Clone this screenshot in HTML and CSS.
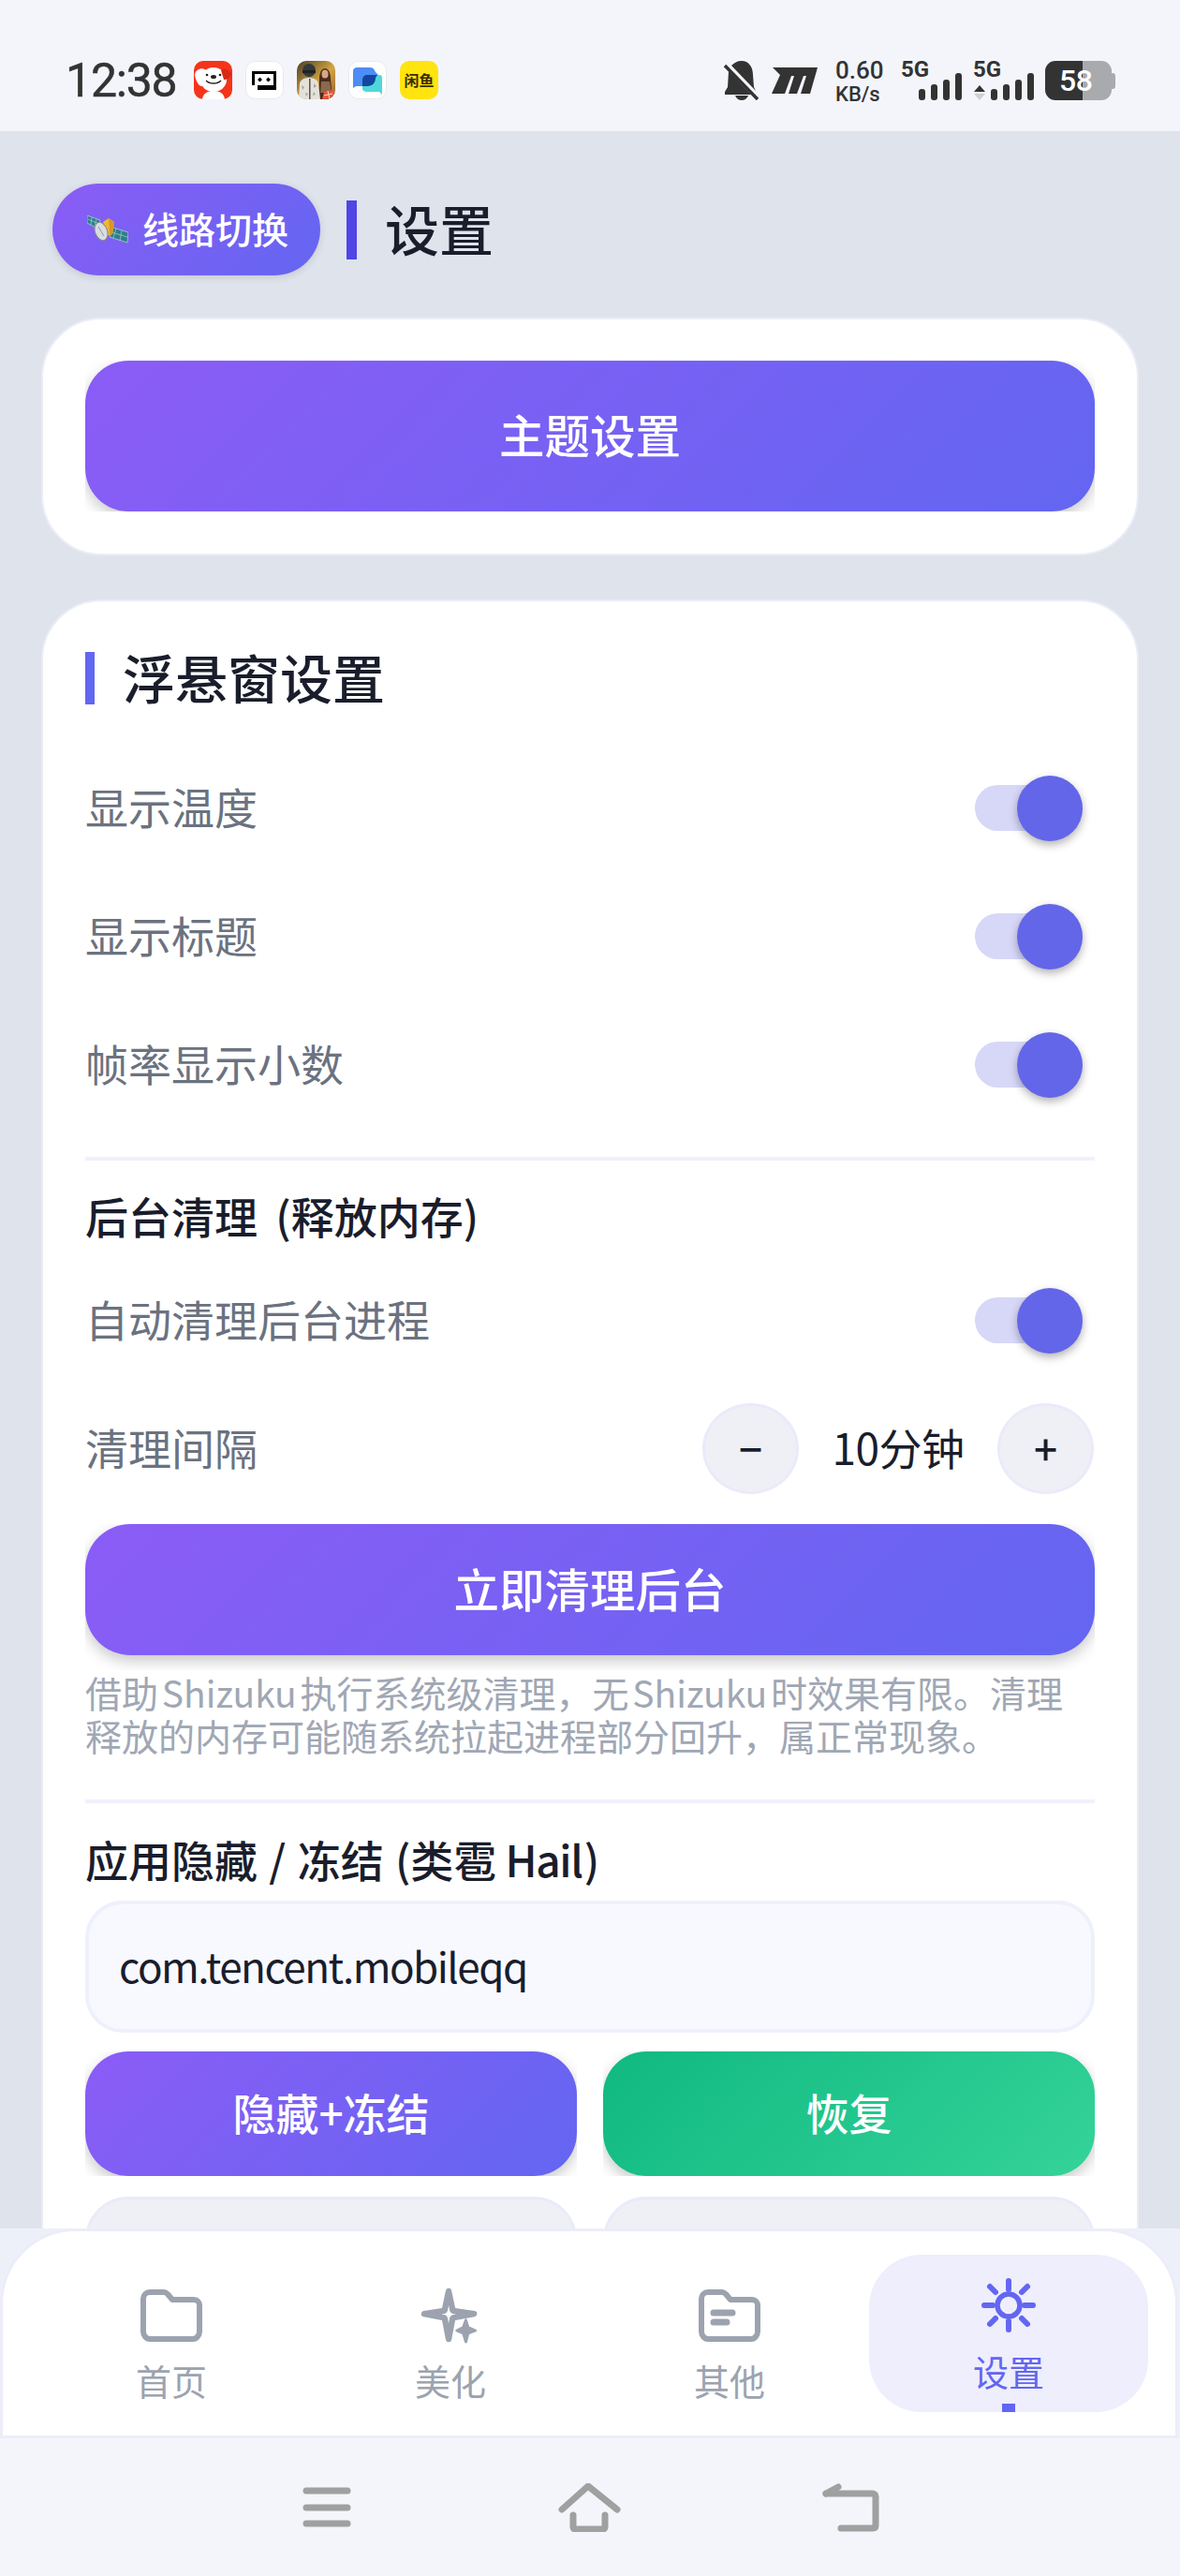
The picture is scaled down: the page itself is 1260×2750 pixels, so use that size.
FILE: index.html
```html
<!DOCTYPE html>
<html lang="zh-CN">
<head>
    <meta charset="UTF-8">
    <meta name="viewport" content="width=device-width, initial-scale=1.0">
    <title>设置</title>
    <link rel="stylesheet" href="styles.css">
</head>
<body>
    <div class="status-bar">
        <div class="status-left">
            <span class="clock">12:38</span>
            <div class="app-icons">
                <svg class="app-icon" viewBox="0 0 41 41">
                    <rect width="41" height="41" rx="10" fill="#f5341a"/>
                    <ellipse cx="21" cy="20" rx="14" ry="13" fill="#fff"/>
                    <path d="M1 14c1-5 8-8 12-4L9 27c-4 1-8-8-8-13z" fill="#fff"/>
                    <path d="M40 14c-1-4-7-7-11-4l3 10c3 0 7-2 8-6z" fill="#d62a12"/>
                    <path d="M9 41c1-7 6-9 12-9s11 2 12 9z" fill="#fff"/>
                    <ellipse cx="21" cy="17" rx="3" ry="2" fill="#222"/>
                    <circle cx="14" cy="15" r="1.300" fill="#222"/>
                    <circle cx="28" cy="15" r="1.300" fill="#222"/>
                    <path d="M13 21c4 4 12 4 16 0" fill="none" stroke="#222" stroke-width="1.300"/>
                </svg>
                <svg class="app-icon" viewBox="0 0 41 41">
                    <rect x=".5" y=".5" width="40" height="40" rx="10" fill="#fff" stroke="#e8e9ee"/>
                    <path d="M7 11h26v20H13v-5H7z" fill="#000"/>
                    <rect x="10" y="14" width="20" height="12" fill="#fff"/>
                    <path d="M15.500 17.500l2.500 2.500-2.500 2.500-2.500-2.500zM24.500 17.500l2.500 2.500-2.500 2.500-2.500-2.500z" fill="#000"/>
                </svg>
                <svg class="app-icon" viewBox="0 0 41 41">
                    <defs>
                        <linearGradient id="game-bg" x1="0" y1="0" x2="1" y2="1">
                            <stop offset="0" stop-color="#4a3c2a"/>
                            <stop offset=".55" stop-color="#d3a53e"/>
                            <stop offset="1" stop-color="#9a5f34"/>
                        </linearGradient>
                        <clipPath id="game-clip"><rect width="41" height="41" rx="10"/></clipPath>
                    </defs>
                    <g clip-path="url(#game-clip)">
                        <rect width="41" height="41" fill="url(#game-bg)"/>
                        <path d="M23 41l1-22c0-6 2-11 6-11s6 5 6 11l2 22z" fill="#4a2c20"/>
                        <ellipse cx="30" cy="14" rx="3.500" ry="4.500" fill="#d9a583"/>
                        <path d="M26 22h9l2 12H25z" fill="#8a6a4a"/>
                        <circle cx="13" cy="10" r="7" fill="#33383b"/>
                        <path d="M6 10h14v3H6z" fill="#1f2224"/>
                        <path d="M2 41l1-17c1-4 5-6 10-6s9 2 10 6l2 17z" fill="#e4e1d8"/>
                        <path d="M5 26l3 2-2 3zM18 24l3 3-3 2zM9 34l3 1-2 3zM18 33l2 3-3 1z" fill="#a8a59c"/>
                        <path d="M13 19h1.500v22H13z" fill="#55534e"/>
                        <path d="M29 33l10-2v10H27z" fill="#e8553a"/>
                        <path d="M33 32l2 9M29 37l9-2" stroke="#f7d2c4" stroke-width="1"/>
                    </g>
                </svg>
                <svg class="app-icon" viewBox="0 0 41 41">
                    <rect x=".5" y=".5" width="40" height="40" rx="10" fill="#fff" stroke="#e8e9ee"/>
                    <path d="M5 11c0-3 2-4 4-4h14c4 0 5 3 6 5l3 3h-11c-3 0-5 2-5 5v7H8l-3 2z" fill="#4d8df5"/>
                    <path d="M15 20c0-3 2-5 5-5h13c2 0 3 1 3 3v18l-3-3H20c-3 0-5-1-5-4z" fill="#4fd8dc"/>
                    <path d="M15 27v-7c0-3 2-5 5-5h11l-2 3c0 5-3 9-9 9z" fill="#13479f"/>
                </svg>
                <span class="app-icon xianyu">闲鱼</span>
            </div>
        </div>
        <div class="status-right">
            <svg class="bell" viewBox="0 0 39 42">
                <path d="M5 11l-1 17-3 5v3h28L5 11zM8 5l26 27-2-4-1-13C31 6 26 0 19 0c-5 0-8 2-11 5zM12 37h14c-1 3-4 5-7 5s-6-2-7-5z" fill="#333"/>
                <path d="M1 5l35 36" stroke="#333" stroke-width="3.500" fill="none"/>
            </svg>
            <svg class="carrier" viewBox="0 0 49 28">
                <path d="M1 0h48l-8 28H31l6-19h-3l-7 19h-9l6-19h-3l-7 19H0L9 8z" fill="#333"/>
            </svg>
            <div class="speed"><span>0.60</span><span class="speed-unit">KB/s</span></div>
            <div class="signal">
                <span class="net">5G</span>
                <div class="bars">
                    <i class="bar-1"></i><i class="bar-2"></i><i class="bar-3"></i><i class="bar-4"></i>
                </div>
            </div>
            <div class="signal signal-data">
                <span class="net">5G</span>
                <svg class="arrows" viewBox="0 0 12 16">
                    <path d="M6 0l6 7H0z" fill="#333"/>
                    <path d="M0 9h12l-6 7z" fill="#cfd0d4"/>
                </svg>
                <div class="bars">
                    <i class="bar-1"></i><i class="bar-2"></i><i class="bar-3"></i><i class="bar-4"></i>
                </div>
            </div>
            <div class="battery"><span>58</span></div>
        </div>
    </div>

    <div class="page">
        <div class="page-header">
            <button class="line-btn">
                <svg class="satellite" viewBox="0 0 44 30">
                    <path d="M0 0l14 5-3 9L0 8z" fill="#2f7e8a" stroke="#a9cfd3" stroke-width=".8"/>
                    <path d="M28 13l16 5-1 11-19-6z" fill="#2f7e8a" stroke="#a9cfd3" stroke-width=".8"/>
                    <path d="M5 2l-1 8M10 4l-2 8M1 4l12 5M31 14l-3 10M37 16l-2 11M26 18l17 5" stroke="#a9cfd3" stroke-width=".7"/>
                    <path d="M17 7l6-4 6 4-2 13-6 2z" fill="#f2b632"/>
                    <path d="M23 3l6 4-2 13-3 1z" fill="#d9962a"/>
                    <ellipse cx="15" cy="17" rx="6.500" ry="10" transform="rotate(-20 15 17)" fill="#d8dde0" stroke="#7d8890" stroke-width="1"/>
                    <path d="M12 12l6 10" stroke="#8f9aa2" stroke-width="1"/>
                </svg>
                <span class="btn-label">线路切换</span>
            </button>
            <h1 class="page-title"><span>设置</span></h1>
        </div>

        <div class="card card-theme">
            <div class="btn-clip">
                <button class="btn btn-primary btn-theme">主题设置</button>
            </div>
        </div>

        <div class="card card-settings">
            <h2 class="card-title"><span>浮悬窗设置</span></h2>

            <div class="row">
                <span class="row-label">显示温度</span>
                <div class="toggle"><i></i></div>
            </div>
            <div class="row">
                <span class="row-label">显示标题</span>
                <div class="toggle"><i></i></div>
            </div>
            <div class="row">
                <span class="row-label">帧率显示小数</span>
                <div class="toggle"><i></i></div>
            </div>

            <div class="divider"></div>

            <h3 class="section-title">后台清理 (释放内存)</h3>
            <div class="row">
                <span class="row-label">自动清理后台进程</span>
                <div class="toggle"><i></i></div>
            </div>
            <div class="row">
                <span class="row-label">清理间隔</span>
                <div class="stepper">
                    <button class="step-btn">−</button>
                    <span class="step-value">10分钟</span>
                    <button class="step-btn">+</button>
                </div>
            </div>
            <div class="btn-clip btn-clip-low">
                <button class="btn btn-primary btn-clean">立即清理后台</button>
            </div>
            <p class="note">借助 Shizuku 执行系统级清理，无 Shizuku 时效果有限。清理释放的内存可能随系统拉起进程部分回升，属正常现象。</p>

            <div class="divider divider-second"></div>

            <h3 class="section-title section-hail">应用隐藏 / 冻结 (类雹<span class="latin">Hail</span>)</h3>
            <input class="pkg-input" type="text" value="com.tencent.mobileqq">
            <div class="btn-grid">
                <div class="btn-clip"><button class="btn btn-primary btn-half">隐藏+冻结</button></div>
                <div class="btn-clip"><button class="btn btn-green btn-half">恢复</button></div>
                <button class="btn btn-grey btn-half"></button>
                <button class="btn btn-grey btn-half"></button>
            </div>
        </div>
    </div>

    <div class="bottom-nav">
        <div class="nav-inner">
            <div class="nav-item">
                <svg class="nav-icon" viewBox="0 0 66 56">
                    <path d="M3 10c0-4 3-7 7-7h15c2 0 3 1 4 2l5 6h23c4 0 6 3 6 6v28c0 4-3 8-7 8H10c-4 0-7-4-7-8z" fill="none" stroke="#9ca3af" stroke-width="6" stroke-linejoin="round"/>
                </svg>
                <span>首页</span>
            </div>
            <div class="nav-item">
                <svg class="nav-icon" viewBox="0 0 66 64" >
                    <path d="M31 5l4 19c0 2 1 3 3 3l21 3-21 4c-2 0-3 1-3 3l-4 21-4-21c0-2-1-3-3-3L4 30l20-3c2 0 3-1 3-3z" fill="#fff" stroke="#9ca3af" stroke-width="6.500" stroke-linejoin="round"/>
                    <path d="M50 37l2.500 8 8 3.500-8 3-2.500 9.500-3-9.500-7-3 7-3.500z" fill="#9ca3af" stroke="#9ca3af" stroke-width="3" stroke-linejoin="round"/>
                </svg>
                <span>美化</span>
            </div>
            <div class="nav-item">
                <svg class="nav-icon" viewBox="0 0 66 56">
                    <path d="M3 10c0-4 3-7 7-7h15c2 0 3 1 4 2l5 6h23c4 0 6 3 6 6v28c0 4-3 8-7 8H10c-4 0-7-4-7-8z" fill="none" stroke="#9ca3af" stroke-width="6" stroke-linejoin="round"/>
                    <path d="M16 25h20M16 35h14" stroke="#9ca3af" stroke-width="7" stroke-linecap="round"/>
                </svg>
                <span>其他</span>
            </div>
            <div class="nav-item nav-active">
                <svg class="nav-icon" viewBox="0 0 60 60">
                    <circle cx="30" cy="30" r="12" fill="none" stroke="#6366f1" stroke-width="5.500"/>
                    <path d="M30 4v9M30 47v9M4 30h9M47 30h9M10 10l6 6M50 10l-6 6M10 50l6-6M50 50l-6-6" stroke="#6366f1" stroke-width="6" stroke-linecap="round"/>
                </svg>
                <span>设置</span>
                <i class="nav-dot"></i>
            </div>
        </div>
    </div>

    <div class="system-bar">
        <svg class="sys-icon" viewBox="0 0 70 52">
            <path d="M10 8h44M10 26h44M10 43h44" stroke="#a0a0a0" stroke-width="7" stroke-linecap="round"/>
        </svg>
        <svg class="sys-icon" viewBox="0 0 70 52">
            <path d="M5 28L33 3l31 25M17 34v12c0 3 1 3 3 3h28c3 0 3-1 3-3V34" fill="none" stroke="#a0a0a0" stroke-width="7" stroke-linecap="round" stroke-linejoin="round"/>
        </svg>
        <svg class="sys-icon" viewBox="0 0 70 52">
            <path d="M9 11h50c1 0 3 1 3 3v31c0 2-1 3-3 3H25" fill="none" stroke="#a0a0a0" stroke-width="7" stroke-linecap="round"/>
            <path d="M9 11l13-7" fill="none" stroke="#a0a0a0" stroke-width="7" stroke-linecap="round"/>
        </svg>
    </div>
</body>
</html>
```

FILE: styles.css
```css
* {
    box-sizing: border-box;
}

html, body {
    margin: 0;
    padding: 0;
}

body {
    width: 1260px;
    height: 2750px;
    overflow: hidden;
    display: flex;
    flex-direction: column;
    background: #dfe3ec;
    font-family: "Noto Sans CJK SC", "Noto Sans", sans-serif;
    color: #1a1d2b;
}

button {
    font-family: inherit;
    border: none;
    padding: 0;
}

.latin {
    display: inline-block;
    margin: 0 2px 0 9px;
    letter-spacing: -1.300px;
}

/* Status bar */
.status-bar {
    height: 140px;
    flex-shrink: 0;
    background: #f3f5fb;
    display: flex;
    justify-content: space-between;
    align-items: flex-start;
    padding: 65px 73px 0 70px;
}

.status-left, .status-right {
    display: flex;
    align-items: flex-start;
}

.clock {
    font-family: Roboto, sans-serif;
    font-size: 50px;
    line-height: 42px;
    font-weight: 400;
    letter-spacing: -1.200px;
    -webkit-text-stroke: 0.5px #333;
    color: #333;
    width: 137px;
}

.app-icons {
    display: flex;
    gap: 14px;
}

.app-icon {
    width: 41px;
    height: 41px;
    display: block;
}

.xianyu {
    background: #ffe40f;
    border-radius: 10px;
    font-size: 16px;
    font-weight: 700;
    line-height: 41px;
    text-align: center;
    white-space: nowrap;
    overflow: hidden;
    color: #3a2c00;
}

.bell {
    width: 39px;
    height: 42px;
    margin-right: 12px;
}

.carrier {
    width: 49px;
    height: 28px;
    margin: 7px 19px 0 0;
}

.speed {
    width: 70px;
    display: flex;
    flex-direction: column;
    font-family: Roboto, sans-serif;
    font-weight: 500;
    font-size: 26px;
    line-height: 20px;
    color: #333;
}

.speed-unit {
    font-size: 22px;
    margin-top: 6px;
}

.signal {
    position: relative;
    width: 65px;
    height: 42px;
    display: flex;
    justify-content: flex-end;
    align-items: flex-end;
}

.signal-data {
    margin: 0 12px 0 12px;
}

.net {
    position: absolute;
    left: 0;
    top: -3px;
    font-family: Roboto, sans-serif;
    font-weight: 700;
    font-size: 24px;
    line-height: 24px;
    color: #333;
}

.arrows {
    position: absolute;
    left: 1px;
    bottom: 0;
    width: 12px;
    height: 16px;
}

.bars {
    display: flex;
    align-items: flex-end;
    gap: 5.500px;
}

.bars i {
    display: block;
    width: 7.500px;
    background: #333;
    border-radius: 3px;
}

.bar-1 { height: 12px; }
.bar-2 { height: 17px; }
.bar-3 { height: 22px; }
.bar-4 { height: 29px; }

.battery {
    position: relative;
    width: 71px;
    height: 42px;
    border-radius: 11px;
    background: linear-gradient(90deg, #333 0, #333 40px, #a9aaae 40px);
    font-family: Roboto, sans-serif;
    font-size: 32px;
    font-weight: 500;
    line-height: 42px;
    color: #fff;
    padding-left: 15px;
    letter-spacing: -.5px;
}

.battery::after {
    content: "";
    position: absolute;
    right: -4px;
    top: 13px;
    width: 4px;
    height: 17px;
    background: #a9aaae;
    border-radius: 0 3px 3px 0;
}

/* Page */
.page {
    height: 2239px;
    flex-shrink: 0;
    overflow: hidden;
    padding: 56px 44px 0 44px;
}

.page-header {
    display: flex;
    align-items: center;
    height: 98px;
    padding-left: 12px;
    margin-bottom: 45px;
}

.line-btn {
    width: 286px;
    height: 98px;
    border-radius: 49px;
    background: linear-gradient(135deg, #8b5cf6 0%, #6366f1 100%);
    box-shadow: 0 2px 8px rgba(0, 0, 0, 0.12);
    color: #fff;
    font-size: 39px;
    font-weight: 500;
    display: flex;
    align-items: center;
    padding-left: 37px;
    gap: 15px;
    margin-right: 28px;
}

.btn-label {
    padding-bottom: 4px;
}

.satellite {
    width: 44px;
    height: 30px;
}

.page-title {
    margin: 0;
    font-size: 58px;
    font-weight: 500;
    line-height: 63px;
    border-left: 11px solid #4f46e5;
    padding-left: 30px;
}

.page-title span, .card-title span {
    position: relative;
    top: -2px;
}

.card {
    background: #fff;
    border: 2px solid #eaedf8;
    border-radius: 64px;
    padding: 0 45px;
}

.card-theme {
    height: 254px;
    padding-top: 44px;
    margin-bottom: 47px;
}

.card-settings {
    padding-top: 54px;
    padding-bottom: 60px;
}

.card-title {
    margin: 0 0 42px;
    font-size: 56px;
    font-weight: 500;
    line-height: 56px;
    border-left: 10px solid #6366f1;
    padding-left: 30px;
}

.btn-clip {
    overflow: hidden;
}

.btn-clip-low {
    margin-top: 12px;
    padding-bottom: 16px;
    margin-bottom: -16px;
}

.btn {
    display: block;
    width: 100%;
    color: #fff;
    font-weight: 500;
}

.btn-primary {
    background: linear-gradient(135deg, #8b5cf6 0%, #6366f1 100%);
    box-shadow: 0 6px 16px rgba(0, 0, 0, 0.22);
}

.btn-green {
    background: linear-gradient(135deg, #10b981 0%, #34d399 100%);
    box-shadow: 0 6px 16px rgba(0, 0, 0, 0.22);
}

.btn-grey {
    background: #eff0f5;
    border: 3px solid #eaeafa;
}

.btn-theme {
    height: 161px;
    border-radius: 46px;
    font-size: 48.500px;
    padding-bottom: 6px;
}

.btn-clean {
    height: 140px;
    border-radius: 48px;
    font-size: 48.500px;
    padding-bottom: 4px;
}

.row {
    height: 137px;
    display: flex;
    justify-content: space-between;
    align-items: center;
}

.row-label {
    font-size: 46px;
    color: #6b7280;
    padding-bottom: 5px;
}

.toggle {
    position: relative;
    width: 115px;
    height: 49px;
    margin-right: 13px;
    background: #d7d7f8;
    border-radius: 25px;
}

.toggle i {
    position: absolute;
    right: 0;
    top: -10px;
    width: 70px;
    height: 70px;
    border-radius: 50%;
    background: #6366e9;
    box-shadow: 0 4px 10px rgba(0, 0, 0, 0.3);
}

.divider {
    height: 4px;
    margin-top: 30px;
    background: #f0f0fb;
}

.divider-second {
    margin-top: 46px;
}

.section-title {
    margin: 30px 0 16px;
    font-size: 46px;
    font-weight: 500;
    line-height: 56px;
    word-spacing: 9px;
}

.section-hail {
    margin: 31px 0 17px;
    word-spacing: 2px;
}

.stepper {
    display: flex;
    align-items: center;
    margin-right: 1px;
}

.step-btn {
    width: 103px;
    height: 97px;
    border-radius: 50%;
    background: #eff0f6;
    border: 3px solid #eaeafa;
    color: #1a1d2b;
    font-size: 44px;
    font-weight: 500;
    padding-bottom: 4px;
}

.step-value {
    width: 212px;
    text-align: center;
    font-size: 46px;
    letter-spacing: -0.5px;
    padding-bottom: 6px;
}

.note {
    margin: 16px 0 0;
    font-size: 39px;
    line-height: 46px;
    word-spacing: -5px;
    color: #a0a7b4;
}

.pkg-input {
    display: block;
    width: 100%;
    height: 141px;
    padding: 0 32px 3px;
    border: 4px solid #eef0fc;
    border-radius: 40px;
    background: #f8f9ff;
    color: #1a1d2b;
    font-family: inherit;
    font-size: 44px;
    letter-spacing: -1.500px;
}

.btn-grid {
    display: grid;
    grid-template-columns: 1fr 1fr;
    gap: 22px 28px;
    margin-top: 20px;
}

.btn-half {
    height: 133px;
    border-radius: 46px;
    font-size: 46px;
    padding-bottom: 6px;
}

/* Bottom navigation */
.bottom-nav {
    height: 224px;
    flex-shrink: 0;
    background: #eef0f9;
}

.nav-inner {
    height: 100%;
    margin-right: 2px;
    background: #fff;
    border: 3px solid #ecedf9;
    border-radius: 80px 80px 0 0;
    display: grid;
    grid-template-columns: repeat(4, 298px);
    align-items: center;
    padding-left: 31px;
}

.nav-item {
    position: relative;
    height: 168px;
    display: flex;
    flex-direction: column;
    align-items: center;
    color: #9ca3af;
    font-size: 38px;
    line-height: 46px;
    padding-top: 34px;
}

.nav-icon {
    width: 66px;
    height: 62px;
    margin-bottom: 15px;
}

.nav-active {
    background: #eeeefd;
    border-radius: 56px;
    color: #6366f1;
    padding-top: 24px;
}

.nav-active .nav-icon {
    width: 60px;
    height: 60px;
    margin-bottom: 17px;
}

.nav-dot {
    position: absolute;
    left: 142px;
    bottom: 0;
    width: 14px;
    height: 9px;
    background: #6366f1;
}

/* System bar */
.system-bar {
    flex: 1;
    background: #f3f5fb;
    display: flex;
    justify-content: center;
    padding-top: 48px;
    gap: 208px;
}

.sys-icon {
    width: 70px;
    height: 52px;
}
```
